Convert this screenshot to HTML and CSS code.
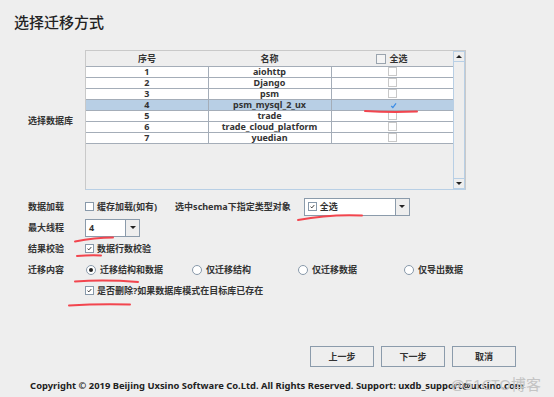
FILE: index.html
```html
<!DOCTYPE html>
<html>

<head>
    <title>选择迁移方式</title>
    <link rel="stylesheet" href="styles.css">
</head>

<body>
    <div class="dialog">
        <h1 class="title">选择迁移方式</h1>

        <div class="form">
            <div class="label db-label">选择数据库</div>
            <div class="scroll-pane">
                <div class="viewport">
                    <table class="db-table">
                        <thead>
                            <tr>
                                <th>序号</th>
                                <th>名称</th>
                                <th><span class="check"></span>全选</th>
                            </tr>
                        </thead>
                        <tbody>
                            <tr><td>1</td><td>aiohttp</td><td><span class="cell-check"></span></td></tr>
                            <tr><td>2</td><td>Django</td><td><span class="cell-check"></span></td></tr>
                            <tr><td>3</td><td>psm</td><td><span class="cell-check"></span></td></tr>
                            <tr class="selected"><td>4</td><td>psm_mysql_2_ux</td><td><span class="cell-check on"><svg viewBox="0 0 10 10"><path d="M2.5 5.5 L4.3 7.3 L7.8 2.6" /></svg></span></td></tr>
                            <tr><td>5</td><td>trade</td><td><span class="cell-check"></span></td></tr>
                            <tr><td>6</td><td>trade_cloud_platform</td><td><span class="cell-check"></span></td></tr>
                            <tr><td>7</td><td>yuedian</td><td><span class="cell-check"></span></td></tr>
                        </tbody>
                    </table>
                </div>
                <div class="scrollbar">
                    <div class="arrow-btn"><span class="tri up"></span></div>
                    <div class="thumb"></div>
                    <div class="arrow-btn"><span class="tri down"></span></div>
                </div>
            </div>

            <div class="label">数据加载</div>
            <div class="controls">
                <span class="option"><span class="check"></span>缓存加载(如有)</span>
                <span class="option schema-label">选中schema下指定类型对象</span>
                <div class="combo type-combo">
                    <div class="combo-value"><span class="check checked"><svg viewBox="0 0 10 10"><path d="M2.3 5.2 L4 7 L7.5 3" /></svg></span>全选</div>
                    <div class="combo-btn"><span class="tri down"></span></div>
                </div>
            </div>

            <div class="label">最大线程</div>
            <div class="controls">
                <div class="combo thread-combo">
                    <div class="combo-value">4</div>
                    <div class="combo-btn"><span class="tri down"></span></div>
                </div>
            </div>

            <div class="label">结果校验</div>
            <div class="controls">
                <span class="option"><span class="check checked"><svg viewBox="0 0 10 10"><path d="M2.3 5.2 L4 7 L7.5 3" /></svg></span>数据行数校验</span>
            </div>

            <div class="label">迁移内容</div>
            <div class="controls radios">
                <span class="option"><span class="radio on"></span>迁移结构和数据</span>
                <span class="option"><span class="radio"></span>仅迁移结构</span>
                <span class="option"><span class="radio"></span>仅迁移数据</span>
                <span class="option"><span class="radio"></span>仅导出数据</span>
            </div>

            <div class="label"></div>
            <div class="controls">
                <span class="option"><span class="check checked"><svg viewBox="0 0 10 10"><path d="M2.3 5.2 L4 7 L7.5 3" /></svg></span>是否删除?如果数据库模式在目标库已存在</span>
            </div>
        </div>

        <div class="actions">
            <button>上一步</button>
            <button>下一步</button>
            <button>取消</button>
        </div>

        <div class="footer">Copyright © 2019 Beijing Uxsino Software Co.Ltd. All Rights Reserved. Support:&nbsp;uxdb_support@uxsino.com</div>
    </div>

    <!-- hand drawn marks on top of the screenshot -->
    <svg class="marks" width="554" height="397" viewBox="0 0 554 397">
        <path d="M365 111 Q390 112.5 417 111.5" />
        <path d="M298 220 Q330 214 362 215.5" />
        <path d="M75 241.5 Q95 237.5 113 237.5" />
        <path d="M77 256 Q90 255 101 255.5" />
        <path d="M75 281.5 Q105 279.5 138 282" />
        <path d="M69 305.5 Q100 303.5 130 304.5" />
    </svg>

    <div class="watermark">@51CTO博客</div>
</body>

</html>
```

FILE: styles.css
```css
body {
    margin: 0;
    background-color: #eeeeee;
    font-family: "Noto Sans", "Noto Sans CJK SC", sans-serif;
    font-size: 9px;
    font-weight: bold;
    color: #333;
}

.dialog {
    width: 554px;
    height: 397px;
    position: relative;
}

.title {
    margin: 0;
    padding: 12px 0 0 14px;
    height: 38px;
    box-sizing: border-box;
    font-size: 15px;
    line-height: 20px;
    font-weight: 500;
    color: #222;
}

.form {
    display: grid;
    grid-template-columns: 57px 469px;
    grid-template-rows: 146px 21px 21px 21px 21px 21px;
    padding-left: 28px;
    margin-top: 12px;
}

.label {
    display: flex;
    align-items: center;
}

.db-label {
    margin-bottom: 6px;
}

/* database table */
.scroll-pane {
    width: 381px;
    height: 140px;
    box-sizing: border-box;
    border: 1px solid #c9c9c9;
    border-bottom-color: #b8cfe5;
    display: flex;
}

.viewport {
    width: 367px;
    height: 100%;
    background-color: #eeeeee;
}

.db-table {
    border-collapse: collapse;
    width: 367px;
    table-layout: fixed;
}

.db-table th {
    height: 15px;
    padding: 0;
    font-weight: bold;
    text-align: center;
    background-color: #eeeeee;
    border-bottom: 1px solid #a4adb8;
}

.db-table th:first-child,
.db-table td:first-child {
    width: 122px;
}

.db-table th:nth-child(2),
.db-table td:nth-child(2) {
    width: 123px;
}

.db-table td {
    height: 10px;
    padding: 0;
    line-height: 10px;
    text-align: center;
    background-color: #fff;
    border: 1px solid #a4adb8;
    border-top: none;
}

.db-table td:first-child {
    border-left: none;
}

.db-table td:last-child {
    border-right: none;
}

.db-table tr.selected td {
    background-color: #b8cfe5;
}

.cell-check {
    display: inline-block;
    width: 9px;
    height: 9px;
    vertical-align: top;
    border: 1px solid #c8c8c8;
    background-color: #fff;
    box-sizing: border-box;
}

.cell-check.on {
    border-color: transparent;
    background: transparent;
}

.cell-check svg {
    display: block;
    width: 9px;
    height: 9px;
    fill: none;
    stroke: #3d8ee6;
    stroke-width: 1.4;
}

.scrollbar {
    width: 13px;
    display: flex;
    flex-direction: column;
    border-left: 1px solid #b8cfe5;
    box-sizing: border-box;
}

.arrow-btn {
    height: 11px;
    display: flex;
    align-items: center;
    justify-content: center;
    border: 1px solid #b8cfe5;
    border-left: none;
    box-sizing: border-box;
    background-color: #eeeeee;
}

.thumb {
    flex: 1;
    border-right: 1px solid #b8cfe5;
}

.tri {
    width: 0;
    height: 0;
    border-left: 3px solid transparent;
    border-right: 3px solid transparent;
}

.tri.up {
    border-bottom: 3px solid #222;
}

.tri.down {
    border-top: 3px solid #222;
}

/* form controls */
.controls {
    display: flex;
    align-items: center;
}

.option {
    display: inline-flex;
    align-items: center;
    flex-shrink: 0;
    white-space: nowrap;
}

.check {
    display: inline-block;
    width: 9px;
    height: 9px;
    margin-right: 3px;
    border: 1px solid #8899aa;
    background-color: #fff;
    box-sizing: border-box;
}

.db-table th .check {
    width: 10px;
    height: 10px;
    vertical-align: -2px;
    border-color: #9aa4ae;
    background-color: #f4f4f4;
}

.check svg {
    display: block;
    width: 100%;
    height: 100%;
    fill: none;
    stroke: #222;
    stroke-width: 1.3;
}

.schema-label {
    margin-left: 18px;
}

.combo {
    display: flex;
    flex-shrink: 0;
    height: 18px;
    box-sizing: border-box;
    border: 1px solid #8b9bab;
    background-color: #fff;
}

.type-combo {
    width: 106px;
    margin-left: 13px;
}

.thread-combo {
    width: 55px;
}

.combo-value {
    flex: 1;
    display: flex;
    align-items: center;
    padding-left: 3px;
}

.combo-btn {
    width: 13px;
    display: flex;
    align-items: center;
    justify-content: center;
    border-left: 1px solid #8b9bab;
    background-color: #eeeeee;
}

.combo-btn .tri {
    border-left-width: 3.5px;
    border-right-width: 3.5px;
    border-top-width: 3.5px;
}

.radios .option {
    width: 106px;
}

.radios .option:first-child {
    margin-left: 1px;
}

.radio {
    display: inline-block;
    width: 10px;
    height: 10px;
    margin-right: 4px;
    border: 1px solid #8899aa;
    border-radius: 50%;
    background-color: #fff;
    box-sizing: border-box;
    position: relative;
}

.radio.on::after {
    content: "";
    position: absolute;
    left: 2px;
    top: 2px;
    width: 4px;
    height: 4px;
    border-radius: 50%;
    background-color: #222;
}

/* buttons */
.actions {
    display: flex;
    justify-content: flex-end;
    gap: 7px;
    padding-right: 38px;
    margin-top: 45px;
}

.actions button {
    width: 64px;
    height: 21px;
    padding: 0;
    border: 1px solid #8b9bab;
    background-color: #eeeeee;
    font-family: "Noto Sans", "Noto Sans CJK SC", sans-serif;
    font-size: 9px;
    font-weight: bold;
    color: #333;
}

.footer {
    margin-top: 12px;
    text-align: center;
    font-size: 9.4px;
    color: #222;
}

.marks {
    position: absolute;
    left: 0;
    top: 0;
    fill: none;
    stroke: #f2454e;
    stroke-width: 2;
    stroke-linecap: round;
}

.watermark {
    position: absolute;
    left: 451px;
    top: 373px;
    font-family: "Noto Sans", "Noto Sans CJK SC", sans-serif;
    font-size: 15px;
    font-weight: normal;
    color: #c4c4c4;
}
```
